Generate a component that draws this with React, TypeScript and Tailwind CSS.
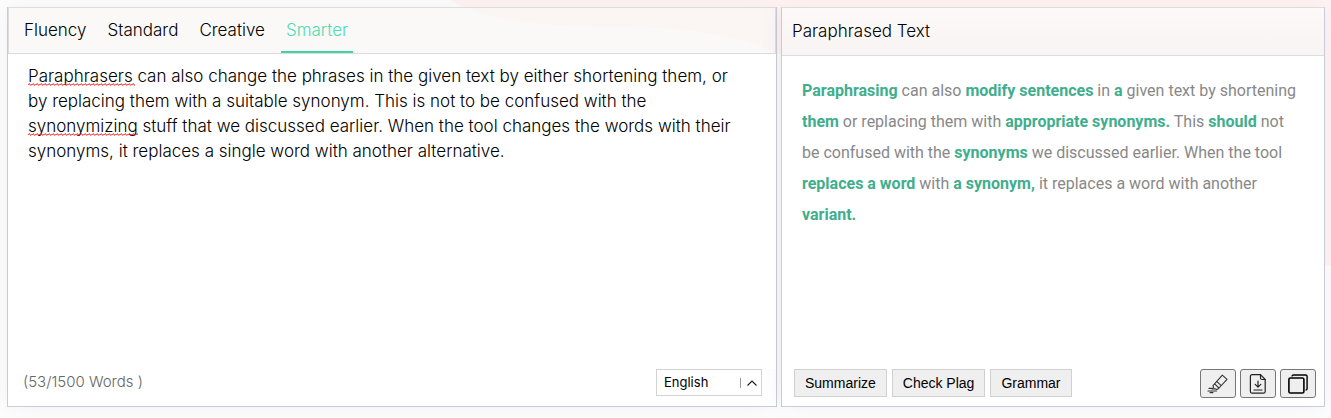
import { useState } from "react";

const MODES = ["Fluency", "Standard", "Creative", "Smarter"];

const SOURCE =
  "Paraphrasers can also change the phrases in the given text by either shortening them, or by replacing them with a suitable synonym. This is not to be confused with the synonymizing stuff that we discussed earlier. When the tool changes the words with their synonyms, it replaces a single word with another alternative.";

const RESULT: { text: string; changed?: boolean }[] = [
  { text: "Paraphrasing", changed: true },
  { text: " can also " },
  { text: "modify sentences", changed: true },
  { text: " in " },
  { text: "a", changed: true },
  { text: " given text by shortening " },
  { text: "them", changed: true },
  { text: " or replacing them with " },
  { text: "appropriate synonyms.", changed: true },
  { text: " This " },
  { text: "should", changed: true },
  { text: " not be confused with the " },
  { text: "synonyms", changed: true },
  { text: " we discussed earlier. When the tool " },
  { text: "replaces a word", changed: true },
  { text: " with " },
  { text: "a synonym,", changed: true },
  { text: " it replaces a word with another " },
  { text: "variant.", changed: true },
];

function Backdrop() {
  return (
    <svg
      className="absolute inset-0 -z-10 h-full w-full"
      viewBox="0 0 1331 418"
      preserveAspectRatio="none"
      aria-hidden="true"
    >
      <path
        d="M450 0C490 22 550 27 615 27C690 27 745 36 785 57C880 105 1120 265 1331 265V0Z"
        fill="#fff4f3"
      />
    </svg>
  );
}

function Squiggle({ className }: { className: string }) {
  return (
    <svg className={`pointer-events-none absolute h-[3px] ${className}`} aria-hidden="true">
      <defs>
        <pattern id="squiggle" width="4" height="3" patternUnits="userSpaceOnUse">
          <path d="M-1 3L1 .6L3 2.4L5 .2" fill="none" stroke="#f01818" strokeWidth="1" />
        </pattern>
      </defs>
      <rect width="100%" height="3" fill="url(#squiggle)" />
    </svg>
  );
}

function HighlighterIcon() {
  return (
    <svg width="22" height="20" viewBox="0 0 22 20" fill="none" stroke="#333" strokeWidth="1.1" strokeLinejoin="round" aria-hidden="true">
      <path d="M15.3 1.2L20 5.4L12 14L7.6 9.8Z" />
      <path d="M7.6 9.8L6 11.6L6.5 13.2L5.2 15L8.2 14.8L10 15.6L12 14" />
      <path d="M9.7 7.4L14.2 11.6" />
      <path d="M2 14.4H5M1 17H9.5M3 18.6H6" strokeLinecap="round" />
    </svg>
  );
}

function DownloadIcon() {
  return (
    <svg width="18" height="20" viewBox="0 0 18 20" fill="none" stroke="#222" strokeWidth="1.2" strokeLinejoin="round" strokeLinecap="round" aria-hidden="true">
      <path d="M3.2 .7H11.5L16.2 5.5V17.4Q16.2 19.2 14.4 19.2H3.2Q1.4 19.2 1.4 17.4V2.5Q1.4 .7 3.2 .7Z" />
      <path d="M11.5 .7V4Q11.5 5.5 13 5.5H16.2" />
      <path d="M9 7V13M6.2 10.4L9 13.2L11.8 10.4M5 16H13" />
    </svg>
  );
}

function CopyIcon() {
  return (
    <svg width="20" height="20" viewBox="0 0 20 20" fill="none" stroke="#000" aria-hidden="true">
      <rect x=".9" y="4" width="15" height="15" rx="1.5" strokeWidth="1.6" />
      <path d="M4 2.5Q4 1 5.5 1H17.6Q19.1 1 19.1 2.5V14.6Q19.1 16.1 17.6 16.1" strokeWidth="1.4" />
    </svg>
  );
}

export default function App() {
  const [mode, setMode] = useState("Smarter");
  const [source, setSource] = useState(SOURCE);

  return (
    <div className="relative isolate min-h-screen overflow-hidden bg-[#fdfdfd] pt-[7px] pr-[6px] pb-[11px] pl-[7px] font-['Inter','Liberation_Sans',sans-serif] font-light text-black">
      <Backdrop />
      <main className="grid min-h-[400px] grid-cols-[770fr_544fr] gap-1">
        <section className="flex min-w-0 flex-col border border-t-0 border-[#c9cbda] shadow-[0_0_24px_rgba(0,0,0,0.05)]">
          <div role="tablist" className="flex h-[47px] gap-[11px] border border-[#dddddf] bg-[#f8f6f3]/60 pl-[10px]">
            {MODES.map((name) => (
              <button
                key={name}
                type="button"
                role="tab"
                aria-selected={mode === name}
                onClick={() => setMode(name)}
                className={`border-b-2 px-[5px] pt-[2px] text-[17px] ${
                  mode === name ? "border-[#3fd3a8] text-[#4fdcb2]" : "border-transparent"
                }`}
              >
                {name}
              </button>
            ))}
          </div>

          <div className="relative flex flex-1 bg-white">
            <textarea
              aria-label="Text to paraphrase"
              spellCheck={false}
              value={source}
              onChange={(e) => setSource(e.target.value)}
              className="w-full resize-none overflow-hidden bg-transparent pt-[10px] pr-8 pl-5 text-[17px] leading-[25px] outline-none"
            />
            {source === SOURCE && (
              <>
                <Squiggle className="top-[29px] left-5 w-[107px]" />
                <Squiggle className="top-[79px] left-5 w-[110px]" />
              </>
            )}
          </div>

          <div className="flex items-center justify-between bg-white pr-[14px] pb-[10px] pl-[15px]">
            <p className="text-[15px] text-[#666]">(53/1500 Words )</p>
            <div className="grid w-[106px] items-center border border-[#d3d3d3] bg-white">
              <select
                aria-label="Language"
                className="col-start-1 row-start-1 h-[25px] w-full appearance-none bg-transparent pl-[7px] text-[13px] font-normal outline-none"
              >
                <option>English</option>
              </select>
              <svg className="pointer-events-none col-start-1 row-start-1 mr-1 justify-self-end" width="17" height="10" viewBox="0 0 17 10" fill="none" aria-hidden="true">
                <path d="M.5 0V10" stroke="#999" />
                <path d="M7.5 7.5L12 3L16.5 7.5" stroke="#222" strokeWidth="1.2" />
              </svg>
            </div>
          </div>
        </section>

        <section className="flex min-w-0 flex-col border border-[#c9cbda] border-t-[#dddddf] bg-white shadow-[0_0_24px_rgba(0,0,0,0.05)]">
          <h2 className="flex h-[48px] items-center border-b border-[#dddddf] bg-[linear-gradient(180deg,#fcf9f8,#f8f4f3)] pl-[10px] text-[17px]">
            Paraphrased Text
          </h2>
          <p className="flex-1 px-5 pt-[19px] font-['Roboto',sans-serif] text-[16px] leading-[31px] font-normal text-[#888]">
            {RESULT.map((part, i) =>
              part.changed ? (
                <b key={i} className="font-bold text-[#3fae8d]">
                  {part.text}
                </b>
              ) : (
                part.text
              ),
            )}
          </p>
          <div className="flex items-start justify-between pr-2 pb-2 pl-3">
            <div className="flex gap-[5px] font-['Liberation_Sans',Arial,sans-serif] text-[14px] font-normal">
              {["Summarize", "Check Plag", "Grammar"].map((label) => (
                <button key={label} type="button" className="h-7 border border-[#d0d0d0] bg-[#efefef] px-[10px]">
                  {label}
                </button>
              ))}
            </div>
            <div className="flex gap-1">
              <button type="button" aria-label="Highlight" className="flex h-[29px] w-9 items-center justify-center rounded-[3px] border border-[#767676] bg-[#efefef]">
                <HighlighterIcon />
              </button>
              <button type="button" aria-label="Download" className="flex h-[29px] w-9 items-center justify-center rounded-[3px] border border-[#767676] bg-[#efefef]">
                <DownloadIcon />
              </button>
              <button type="button" aria-label="Copy" className="flex h-[29px] w-9 items-center justify-center rounded-[3px] border border-[#767676] bg-[#efefef]">
                <CopyIcon />
              </button>
            </div>
          </div>
        </section>
      </main>
    </div>
  );
}
